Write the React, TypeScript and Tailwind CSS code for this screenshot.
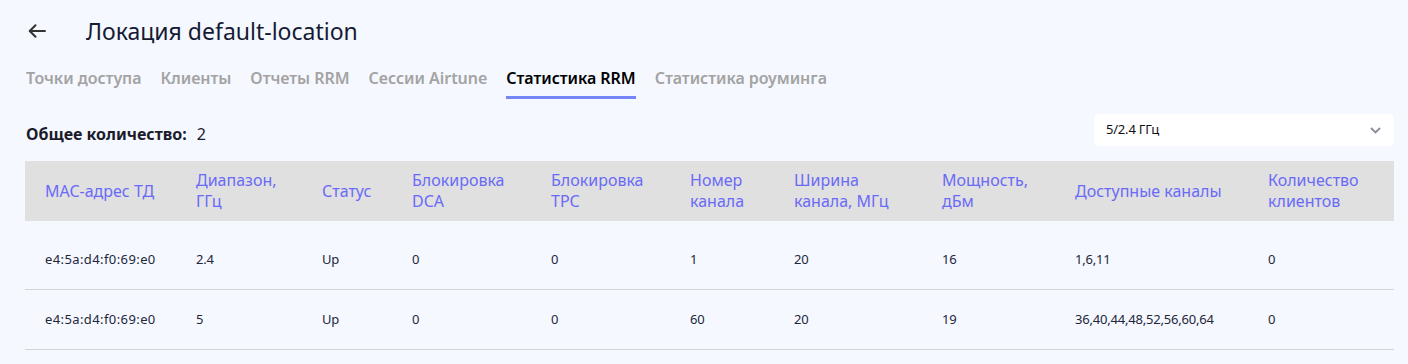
import React from "react";

const cols = [
  { w: "w-[151px]", label: ["MAC-адрес ТД"] },
  { w: "w-[126px]", label: ["Диапазон,", "ГГц"] },
  { w: "w-[90px]", label: ["Статус"] },
  { w: "w-[139px]", label: ["Блокировка", "DCA"] },
  { w: "w-[139px]", label: ["Блокировка", "TPC"] },
  { w: "w-[104px]", label: ["Номер", "канала"] },
  { w: "w-[148px]", label: ["Ширина", "канала, МГц"] },
  { w: "w-[133px]", label: ["Мощность,", "дБм"] },
  { w: "w-[193px]", label: ["Доступные каналы"] },
  { w: "flex-1", label: ["Количество", "клиентов"] },
];

const rows = [
  ["e4:5a:d4:f0:69:e0", "2.4", "Up", "0", "0", "1", "20", "16", "1,6,11", "0"],
  ["e4:5a:d4:f0:69:e0", "5", "Up", "0", "0", "60", "20", "19", "36,40,44,48,52,56,60,64", "0"],
];

const tabs = [
  "Точки доступа",
  "Клиенты",
  "Отчеты RRM",
  "Сессии Airtune",
  "Статистика RRM",
  "Статистика роуминга",
];

export default function App() {
  return (
    <div
      className="w-[1408px] h-[364px] bg-[#f5f8ff] overflow-hidden"
      style={{ fontFamily: '"Noto Sans", "Open Sans", sans-serif' }}
    >
      <div className="flex items-center h-[62px] pl-[28px]">
        <svg width="18" height="14" viewBox="0 0 18 14" fill="none">
          <path d="M17 7H2M7.5 1.2L1.7 7l5.8 5.8" stroke="#333" strokeWidth="2" strokeLinecap="round" strokeLinejoin="round" />
        </svg>
        <div className="ml-[40px] text-[23px] text-[#151a33] leading-none">Локация default-location</div>
      </div>
      <div className="flex gap-[19px] pl-[26px] h-[37px]">
        {tabs.map((t) => {
          const active = t === "Статистика RRM";
          return (
            <div
              key={t}
              className={
                "h-full flex items-start pt-[4px] text-[16px] leading-[24px] font-semibold tracking-[-0.04px] border-b-[3px] " +
                (active ? "text-black border-[#7685f7]" : "text-[#a3a3a3] border-transparent")
              }
            >
              {t}
            </div>
          );
        })}
      </div>
      <div className="flex items-center justify-between pl-[26px] pr-[14px] mt-[15px] h-[32px]">
        <div className="text-[16px] text-[#1b1b2b] pt-[8px]">
          <span className="font-bold">Общее количество:</span>
          <span className="ml-[10px]">2</span>
        </div>
        <div className="w-[300px] h-[32px] bg-white rounded-[5px] flex items-center justify-between pl-[12px] pr-[13px]">
          <span className="text-[13px] text-[#111] tracking-[-0.2px]">5/2.4 ГГц</span>
          <svg width="11" height="7" viewBox="0 0 11 7" fill="none">
            <path d="M1 1l4.5 4.5L10 1" stroke="#8a8c9c" strokeWidth="1.8" />
          </svg>
        </div>
      </div>
      <div className="ml-[25px] w-[1369px] mt-[15px]">
        <div className="flex h-[60px] bg-[#e0e0e0] items-center">
          {cols.map((c, i) => (
            <div key={i} className={c.w + " pl-[20px] text-[16px] leading-[21px] text-[#6a6af8]"}>
              {c.label.map((l, j) => (
                <div key={j}>{l}</div>
              ))}
            </div>
          ))}
        </div>
        <div className="mt-[9px]">
          {rows.map((r, ri) => (
            <div key={ri} className="flex h-[60px] items-center border-b border-[#d3d3d8]">
              {r.map((v, i) => (
                <div
                  key={i}
                  className={
                    cols[i].w +
                    " pl-[20px] text-[13px] text-[#22263a] " +
                    (i === 0 ? "tracking-[0.4px]" : "tracking-[-0.2px]")
                  }
                >
                  {v}
                </div>
              ))}
            </div>
          ))}
        </div>
      </div>
    </div>
  );
}
